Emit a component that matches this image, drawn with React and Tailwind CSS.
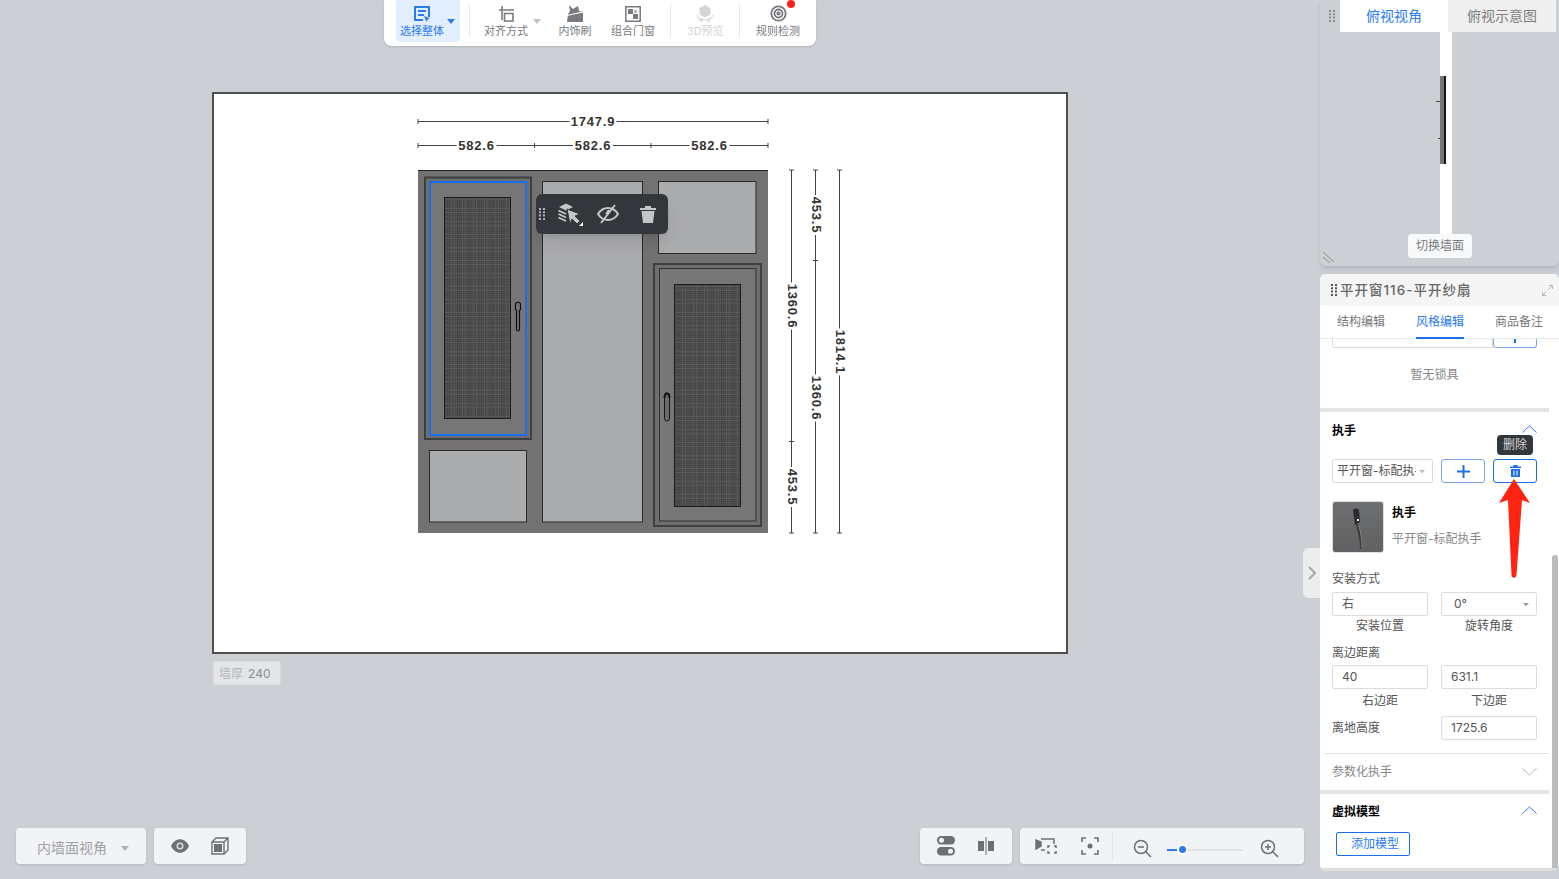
function Caret({ className }) {
  return (
    <svg width="8" height="5" viewBox="0 0 8 5" className={className}>
      <path d="M0 0h8L4 5z" fill="currentColor" />
    </svg>
  );
}

function Chevron({ up, color }) {
  return (
    <svg width="15" height="8" viewBox="0 0 15 8">
      <path d={up ? "M.5 7.5 7.5 1l7 6.5" : "M.5.5 7.5 7l7-6.5"} fill="none" stroke={color} strokeWidth="1" />
    </svg>
  );
}

function Grip({ className }) {
  return (
    <svg width="6" height="12" viewBox="0 0 6 12" className={className}>
      <path d="M0 0h2v2H0zM4 0h2v2H4zM0 3.300h2v2H0zM4 3.300h2v2H4zM0 6.600h2v2H0zM4 6.600h2v2H4zM0 10h2v2H0zM4 10h2v2H4z" fill="currentColor" />
    </svg>
  );
}

function ToolButton({ label, icon, width, active, disabled, caret }) {
  return (
    <div className={`relative flex h-[42px] flex-col items-center pt-[4px] ${width} ${active ? "rounded-b-sm bg-[#e3eeff] text-[#2a7bf0]" : disabled ? "text-[#d3d5d8]" : "text-[#777a7e]"}`}>
      <div className="flex h-[19px] items-center justify-center">{icon}</div>
      <span className="mt-[1px] text-[11px] leading-[14px] whitespace-nowrap">{label}</span>
      {caret && <Caret className={`absolute top-[19px] right-[5px] ${active ? "text-[#2a7bf0]" : "text-[#c0c2c5]"}`} />}
    </div>
  );
}

function TopToolbar() {
  const sep = <div className="mx-[4px] mt-[4px] h-[34px] w-px bg-[#e8e9eb]" />;
  return (
    <div className="absolute top-0 left-[384px] flex h-[46px] w-[432px] rounded-b-lg bg-white pl-[12px] shadow-sm">
      <ToolButton
        label="选择整体"
        width="w-[64px] pr-[12px]"
        active
        caret
        icon={
          <svg width="18" height="18" viewBox="0 0 18 18" fill="none" stroke="currentColor" strokeWidth="2">
            <path d="M16 12V2H2v13h8M5 6h8M5 10h6" />
            <path d="m11 11 6 2.500-2.500 1-1 2.500z" fill="currentColor" stroke="none" />
          </svg>
        }
      />
      <div className="w-[5px]" />
      {sep}
      <ToolButton
        label="对齐方式"
        width="w-[72px] pr-[8px]"
        caret
        icon={
          <svg width="17" height="16" viewBox="0 0 17 16" fill="none" stroke="currentColor" strokeWidth="1.600">
            <path d="M1 4h15M4 0v14" />
            <path d="M6.500 7.500h8.500v7.500H6.500z" />
          </svg>
        }
      />
      <ToolButton
        label="内饰刷"
        width="w-[56px] ml-[1px]"
        icon={
          <svg width="18" height="17" viewBox="0 0 18 17" fill="currentColor">
            <path d="M3 0 7 4l5-3 1 5 4 1v10H1l1-8 2-3z" />
            <path d="m1 10.500 16-3.500" stroke="#fff" strokeWidth="1.200" fill="none" />
          </svg>
        }
      />
      <ToolButton
        label="组合门窗"
        width="w-[60px]"
        icon={
          <svg width="16" height="16" viewBox="0 0 16 16">
            <path d="M.8.800h14.400v14.400H.8z" fill="none" stroke="currentColor" strokeWidth="1.500" />
            <path d="M3 3h5v5H3zM8 8h5v5H8z" fill="currentColor" />
            <path d="M9 4h3v3H9z" fill="currentColor" opacity=".5" />
          </svg>
        }
      />
      <div className="w-[3px]" />
      {sep}
      <ToolButton
        label="3D预览"
        width="w-[60px]"
        disabled
        icon={
          <svg width="18" height="18" viewBox="0 0 18 18" fill="currentColor">
            <path d="m9 0 5.500 3v6.500L9 12.500 3.500 9.500V3z" />
            <path d="M1.500 10c0 3 3 5 7.500 5s7.500-2 7.500-5M6 13l-2 2.500 3 1.500M12 13l2 2.500-3 1.500" fill="none" stroke="currentColor" strokeWidth="1.200" />
          </svg>
        }
      />
      {sep}
      <div className="relative">
        <ToolButton
          label="规则检测"
          width="w-[68px]"
          icon={
            <svg width="17" height="17" viewBox="0 0 17 17" fill="none" stroke="currentColor" strokeWidth="1.800">
              <circle cx="8.500" cy="8.500" r="7.200" />
              <circle cx="8.500" cy="8.500" r="4" />
              <circle cx="8.500" cy="8.500" r="1.200" />
            </svg>
          }
        />
        <span className="absolute top-0 left-[43px] size-[8px] rounded-full bg-[#ff1f1f]" />
      </div>
    </div>
  );
}

function Sash({ x, y, w, h, ix, iy, iw, ih, mx, my, mw, mh, selected }) {
  return (
    <g>
      <rect x={x} y={y} width={w} height={h} fill="#6f6e6f" stroke="#3f3f40" strokeWidth="2" />
      <rect x={ix} y={iy} width={iw} height={ih} fill="#777677" stroke={selected ? "#1a6ff0" : "#333"} strokeWidth={selected ? 2 : 1} />
      <rect x={mx} y={my} width={mw} height={mh} fill="url(#mesh)" stroke="#1d1d1d" strokeWidth="1" />
    </g>
  );
}

function Dim({ d, labels }) {
  return (
    <g>
      <path d={d} stroke="#444" strokeWidth="1" fill="none" />
      {labels.map((l) => (
        <g key={l.x + "-" + l.y} transform={l.rotate ? `rotate(90 ${l.x} ${l.y})` : undefined}>
          <rect x={l.x - (l.t.length * 7 + 5) / 2} y={l.y - 7} width={l.t.length * 7 + 5} height="14" fill="#fff" />
          <text x={l.x} y={l.y + (l.rotate ? 3.500 : 4.500)} textAnchor="middle" fontFamily="'Liberation Sans', sans-serif" fontSize="13" fontWeight="700" fill="#333" letterSpacing=".8">
            {l.t}
          </text>
        </g>
      ))}
    </g>
  );
}

function WindowDrawing() {
  return (
    <svg viewBox="214 94 852 558" className="block h-[558px] w-[852px]">
      <defs>
        <pattern id="mesh" width="2" height="2" patternUnits="userSpaceOnUse">
          <rect width="2" height="2" fill="#424243" />
          <path d="M0 .5h2M.5 0v2" stroke="#4f4f50" strokeWidth=".8" />
        </pattern>
        <pattern id="plaid" width="11" height="13" patternUnits="userSpaceOnUse">
          <path d="M0 0h1v13H0zM3 0h1v13H3zM0 0h11v1H0zM0 4h11v1H0z" fill="#fff" opacity=".07" />
        </pattern>
      </defs>

      <Dim d="M418 121.500H768M418 119v5M768 119v5" labels={[{ x: 593, y: 121.500, t: "1747.9" }]} />
      <Dim
        d="M418 145.500H768M418 143v5M534.500 143v5M651 143v5M768 143v5"
        labels={[
          { x: 476.500, y: 145.500, t: "582.6" },
          { x: 593, y: 145.500, t: "582.6" },
          { x: 709.500, y: 145.500, t: "582.6" },
        ]}
      />
      <Dim
        d="M791.500 170V533M789 170h5M789 441.500h5M789 533h5"
        labels={[
          { x: 791.500, y: 306, t: "1360.6", rotate: true },
          { x: 791.500, y: 487, t: "453.5", rotate: true },
        ]}
      />
      <Dim
        d="M815.500 170V533M813 170h5M813 260.500h5M813 533h5"
        labels={[
          { x: 815.500, y: 215, t: "453.5", rotate: true },
          { x: 815.500, y: 398, t: "1360.6", rotate: true },
        ]}
      />
      <Dim d="M839.500 170V533M837 170h5M837 533h5" labels={[{ x: 839.500, y: 352, t: "1814.1", rotate: true }]} />

      <rect x="418" y="170" width="350" height="363" fill="#737172" />
      <path d="M418 170.500H768" stroke="#222" />
      <rect x="542.500" y="181.500" width="100" height="340.500" fill="#aaabad" stroke="#2a2a2a" />
      <rect x="658.500" y="181.500" width="97.500" height="72" fill="#aaabad" stroke="#2a2a2a" />
      <rect x="429.500" y="450.500" width="97" height="71.500" fill="#aaabad" stroke="#2a2a2a" />

      <Sash x={425} y={177.500} w={106} h={261.500} ix={430} iy={182} iw={96} ih={253} mx={444.500} my={197.500} mw={66} mh={221} selected />
      <rect x="445" y="198" width="65" height="220" fill="url(#plaid)" />
      <path d="M515.500 304.500c0-3 5-3 5 0v5l-1 1v19c0 2-3 2-3 0v-19l-1-1z" fill="#777" stroke="#111" strokeWidth="1.200" />

      <Sash x={654} y={264} w={107} h={262} ix={659.500} iy={268.500} iw={96.500} ih={252.500} mx={674.500} my={284.500} mw={66} mh={222} />
      <rect x="675" y="285" width="65" height="221" fill="url(#plaid)" />
      <rect x="664.500" y="393" width="5" height="28" rx="2.500" fill="#6c6c6c" stroke="#151515" />
      <path d="M664.500 398c0-6 5-6 5 0" fill="none" stroke="#111" strokeWidth="2" />
    </svg>
  );
}

function FloatMenu() {
  return (
    <div className="absolute top-[194px] left-[536px] flex h-[40px] w-[132px] items-center rounded-md bg-[#33363b] text-[#c4c6c9] shadow-lg">
      <Grip className="ml-[3px] text-[#b0b2b5]" />
      <svg width="26" height="24" viewBox="0 0 26 24" className="ml-[12px]" fill="currentColor">
        <path d="M2 5 9 1.500 16 5 9 8.500z" />
        <path d="m1.500 8.500 7.500 3.500M1.500 12 9 15.500M1.500 15.500 9 19" stroke="currentColor" strokeWidth="1.800" fill="none" />
        <path d="m10 7 13 5-5 2 5 5-3 3-5-5-2 5z" stroke="#33363b" strokeWidth="1" />
        <path d="M26 20v4h-4z" fill="#fff" />
      </svg>
      <svg width="22" height="20" viewBox="0 0 22 20" className="ml-[14px]" fill="none" stroke="currentColor" strokeWidth="2">
        <path d="M1 10c5-8 15-8 20 0-5 8-15 8-20 0z" />
        <path d="M18 1 4 19M9 10l3-4" />
      </svg>
      <svg width="16" height="18" viewBox="0 0 16 18" className="ml-[21px]" fill="currentColor">
        <path d="M0 3h16v2H0zM5 1h6v2H5zM1.500 6h13L13 18H3z" />
      </svg>
    </div>
  );
}

function FloatBox({ className, children }) {
  return <div className={`absolute bottom-[15px] flex h-[36px] items-center rounded bg-[#f2f3f5] text-[#6c6f74] shadow-sm ${className}`}>{children}</div>;
}

function BottomBars() {
  return (
    <>
      <FloatBox className="left-[16px] w-[130px] pt-[4px] pl-[21px]">
        <span className="text-sm text-[#a0a2a6]">内墙面视角</span>
        <Caret className="ml-[14px] text-[#b0b2b5]" />
      </FloatBox>

      <FloatBox className="left-[154px] w-[92px]">
        <svg width="18" height="14" viewBox="0 0 18 14" className="ml-[17px]">
          <path d="M0 7c4-9 14-9 18 0-4 9-14 9-18 0z" fill="currentColor" />
          <circle cx="9" cy="7" r="3.500" fill="#d9dadc" />
          <circle cx="9" cy="7" r="2" fill="currentColor" />
        </svg>
        <svg width="18" height="18" viewBox="0 0 18 18" className="ml-[22px]" fill="none" stroke="currentColor" strokeWidth="1.400">
          <path d="M1 5v12h12V5zM1 5l4-4h12v12l-4 4M13 5l4-4" />
          <path d="M3 7h8v8H3z" fill="currentColor" stroke="none" />
        </svg>
      </FloatBox>

      <FloatBox className="left-[920px] w-[92px]">
        <svg width="18" height="20" viewBox="0 0 18 20" className="ml-[17px]">
          <rect y="0" width="18" height="8.500" rx="4.200" fill="currentColor" />
          <circle cx="4.500" cy="4.200" r="2.500" fill="#f2f3f5" />
          <rect y="11" width="18" height="8.500" rx="4.200" fill="currentColor" />
          <circle cx="13.500" cy="15.200" r="2.500" fill="#f2f3f5" />
        </svg>
        <svg width="18" height="18" viewBox="0 0 18 18" className="ml-[22px]" fill="currentColor">
          <path d="M1 4h6v10H1zM11 4h6v10h-6z" />
          <path d="M8.500 0h1v18h-1z" />
        </svg>
      </FloatBox>

      <FloatBox className="left-[1020px] w-[284px]">
        <svg width="22" height="18" viewBox="0 0 22 18" className="ml-[15px]" fill="none" stroke="currentColor" strokeWidth="1.500">
          <path d="M1 3v9l5-3V5z" fill="currentColor" />
          <path d="M6 2h13v5M6 13h4" />
          <path d="M13 11v-2h2M19 9h2v2M21 14v2h-2M15 16h-2v-2" />
        </svg>
        <svg width="18" height="18" viewBox="0 0 18 18" className="ml-[24px]" fill="none" stroke="currentColor" strokeWidth="1.600">
          <path d="M1 5V1h4M13 1h4v4M17 13v4h-4M5 17H1v-4" />
          <circle cx="9" cy="9" r="2.500" fill="currentColor" stroke="none" />
        </svg>
        <div className="ml-[13px] h-[30px] w-px bg-[#e4e5e7]" />
        <svg width="19" height="19" viewBox="0 0 19 19" className="mt-[4px] ml-[20px]" fill="none" stroke="currentColor" strokeWidth="1.500">
          <circle cx="8" cy="8" r="6.500" />
          <path d="M5 8h6M13 13l5 5" />
        </svg>
        <div className="relative mt-[7px] ml-[15px] h-[2px] w-[76px] bg-[#e3e4e6]">
          <div className="h-[2px] w-[11px] bg-[#2a7bf0]" />
          <span className="absolute top-[-2.500px] left-[12px] size-[7px] rounded-full bg-[#2a7bf0] ring-2 ring-white" />
        </div>
        <svg width="19" height="19" viewBox="0 0 19 19" className="mt-[4px] ml-[17px]" fill="none" stroke="currentColor" strokeWidth="1.500">
          <circle cx="8" cy="8" r="6.500" />
          <path d="M5 8h6M8 5v6M13 13l5 5" />
        </svg>
      </FloatBox>
    </>
  );
}

function TopViewPanel() {
  return (
    <div className="relative h-[266px] overflow-hidden rounded-b-md bg-[#ccd0d5] shadow-md">
      <div className="flex h-[32px]">
        <div className="flex w-[20px] items-center justify-center pl-[4px]">
          <Grip className="text-[#8b8d90]" />
        </div>
        <div className="flex w-[108px] items-center justify-center bg-white pb-[2px] text-[14px] text-[#2a7bf0]">俯视视角</div>
        <div className="flex w-[108px] items-center justify-center bg-[#efefef] pb-[2px] text-[14px] text-[#7d7f82]">俯视示意图</div>
      </div>
      <div className="ml-[120px] flex h-[202px] w-[12px] flex-col bg-white pt-[44px]">
        <div className="relative flex h-[88px] w-[6px] justify-end bg-[#777677]">
          <div className="h-full w-[2px] bg-[#151515]" />
          <div className="absolute top-[25px] left-[-4px] h-px w-[4px] bg-[#444]" />
          <div className="absolute top-[62px] left-[-2px] h-px w-[2px] bg-[#444]" />
        </div>
      </div>
      <div className="absolute top-[234px] left-[88px] flex h-[24px] w-[64px] items-center justify-center rounded-sm bg-[#f8f9fb] text-xs text-[#77797c]">切换墙面</div>
      <svg width="14" height="14" viewBox="0 0 14 14" className="absolute bottom-[2px] left-[2px]" stroke="#8b8d90" fill="none">
        <path d="m1 2 11 10M1 7l7 6" />
      </svg>
    </div>
  );
}

function Field({ value, caret, className }) {
  return (
    <div className={`flex h-[24px] items-center justify-between rounded-[2px] border border-[#dcdcdc] bg-white pr-[6px] pl-[9px] text-xs text-[#555] ${className}`}>
      <span>{value}</span>
      {caret && <Caret className="scale-75 text-[#999]" />}
    </div>
  );
}

function PropertyPanel() {
  return (
    <div className="flex h-[597px] flex-col overflow-hidden rounded-t-md rounded-b-md bg-white">
      <div className="flex h-[32px] items-center bg-[#f5f5f5] pl-[11px] text-[#666]">
        <Grip className="text-[#555]" />
        <span className="ml-[3px] text-[13.500px] font-medium tracking-[1px]">平开窗116-平开纱扇</span>
        <svg width="11" height="11" viewBox="0 0 11 11" className="mr-[6px] ml-auto" fill="none" stroke="#b5b5b5" strokeWidth="1">
          <path d="M6.500 4.500 10.500.5M7 .5h3.500V4M4.500 6.500l-4 4M4 10.500H.5V7" />
        </svg>
      </div>
      <div className="flex h-[33px] justify-between border-b border-[#e8e8e8] pr-[16px] pl-[17px] text-xs text-[#777]">
        <div className="pt-[8px]">结构编辑</div>
        <div className="h-[33px] border-b-2 border-[#1c6fe6] pt-[8px] text-[#2a7bf0]">风格编辑</div>
        <div className="pt-[8px]">商品备注</div>
      </div>

      <div className="relative flex-1 overflow-hidden">
        <div className="w-[229px]">
          <div className="flex h-[9px] px-[12px]">
            <div className="w-[161px] rounded-b-[2px] border border-t-0 border-[#dcdcdc]" />
            <div className="flex w-[44px] justify-center rounded-b-[3px] border border-t-0 border-[#7aa8ea]">
              <div className="h-[4px] w-[2px] bg-[#1c6fe6]" />
            </div>
          </div>
          <div className="flex h-[60px] items-start justify-center pt-[19px] text-xs text-[#888]">暂无锁具</div>
          <div className="h-[4px] bg-[#e4e4e4]" />

          <div className="px-[12px]">
            <div className="flex h-[36px] items-center justify-between pt-[2px]">
              <span className="text-xs font-semibold text-black">执手</span>
              <span className="mt-[-4px]">
                <Chevron up color="#2a7bf0" />
              </span>
            </div>
            <div className="relative mt-[11px] flex h-[24px]">
              <div className="flex h-[24px] w-[101px] items-center justify-between rounded-[2px] border border-[#dcdcdc] pr-[6px] pl-[4px] text-xs text-[#555]">
                <span className="w-[79px] overflow-hidden whitespace-nowrap">平开窗-标配执手</span>
                <Caret className="scale-75 text-[#bbb]" />
              </div>
              <div className="ml-[8px] flex w-[44px] items-center justify-center rounded-[3px] border border-[#7aa8ea] text-[#1c6fe6]">
                <svg width="13" height="13" viewBox="0 0 13 13" fill="currentColor">
                  <path d="M5.500 0h2v13h-2zM0 5.500h13v2H0z" />
                </svg>
              </div>
              <div className="ml-[8px] flex w-[44px] items-center justify-center rounded-[3px] border border-[#1c6fe6] text-[#1c6fe6]">
                <svg width="11" height="12" viewBox="0 0 11 12" fill="currentColor">
                  <path d="M0 1.500h11v1.500H0zM3.500 0h4v1.500h-4zM1 4h9v8H1z" />
                  <path d="M3.500 5.500h1v5h-1zM6.500 5.500h1v5h-1z" fill="#fff" />
                </svg>
              </div>
            </div>

            <div className="mt-[18px] flex">
              <div className="size-[52px] overflow-hidden rounded-[3px] border border-[#dedede]">
                <svg width="50" height="50" viewBox="0 0 50 50" className="block">
                  <defs>
                    <linearGradient id="thumbBg" x1="0" y1="0" x2="0" y2="1">
                      <stop offset="0" stopColor="#6d6f71" />
                      <stop offset="1" stopColor="#5f6163" />
                    </linearGradient>
                  </defs>
                  <rect width="50" height="50" fill="url(#thumbBg)" />
                  <path d="M20 8c1-2 5-2 6 0l1 12-5 3z" fill="#2c2c2e" />
                  <path d="M24 21c3 6 5 16 5 26h-2c0-8-2-16-4-24z" fill="#3f3e3b" />
                  <path d="M26 24c2 6 3 14 3 22" stroke="#8a8578" strokeWidth=".8" fill="none" />
                  <path d="M24 17h2v2h-2z" fill="#eee" />
                </svg>
              </div>
              <div className="ml-[8px] flex flex-col">
                <span className="mt-[4px] text-xs leading-[16px] font-semibold text-black">执手</span>
                <span className="mt-[10px] text-xs leading-[16px] text-[#888]">平开窗-标配执手</span>
              </div>
            </div>

            <div className="mt-[18px] text-xs leading-[16px] text-[#555]">安装方式</div>
            <div className="mt-[5px] grid grid-cols-[96px_96px] gap-x-[13px] text-center">
              <Field value="右" className="text-left" />
              <Field value="0°" caret className="pl-[12px]" />
              <div className="mt-[2px] text-xs leading-[16px] text-[#555]">安装位置</div>
              <div className="mt-[2px] text-xs leading-[16px] text-[#555]">旋转角度</div>
            </div>
            <div className="mt-[11px] text-xs leading-[16px] text-[#555]">离边距离</div>
            <div className="mt-[4px] grid grid-cols-[96px_96px] gap-x-[13px] text-center">
              <Field value="40" />
              <Field value="631.1" />
              <div className="mt-[4px] text-xs leading-[16px] text-[#555]">右边距</div>
              <div className="mt-[4px] text-xs leading-[16px] text-[#555]">下边距</div>
            </div>
            <div className="mt-[7px] grid grid-cols-[96px_96px] items-center gap-x-[13px]">
              <span className="text-xs text-[#555]">离地高度</span>
              <Field value="1725.6" />
            </div>
          </div>

          <div className="mt-[13px] ml-[4px] h-px bg-[#e2e2e2]" />
          <div className="flex h-[36px] items-center justify-between px-[12px] text-xs text-[#888]">
            <span>参数化执手</span>
            <Chevron color="#b5b5b5" />
          </div>
          <div className="h-[4px] bg-[#e4e4e4]" />
          <div className="flex h-[36px] items-center justify-between px-[12px]">
            <span className="text-xs font-semibold text-black">虚拟模型</span>
            <span className="mt-[-4px]">
              <Chevron up color="#2a7bf0" />
            </span>
          </div>
          <div className="mt-[2px] ml-[16px] flex h-[24px] w-[74px] items-center justify-center rounded-[2px] border border-[#1c6fe6] pb-[1px] pl-[4px] text-xs text-[#2a7bf0]">添加模型</div>
        </div>

        <div className="absolute top-[216px] right-[1px] bottom-0 w-[6px] rounded-full bg-[#bdbdbd]" />
        <div className="absolute right-0 bottom-0 left-0 h-[3px] bg-[#dcdcdc]" />
      </div>
    </div>
  );
}

function RedArrow() {
  return (
    <svg width="34" height="102" viewBox="0 0 34 102" className="absolute top-[478px] left-[1498px]">
      <path d="M16 1 32 25 24 22 18.500 97c-.3 3.500-4.700 3.500-5 0L10 22 1 25z" fill="#ff2311" />
    </svg>
  );
}

export default function App() {
  return (
    <div className="relative flex h-[879px] w-full overflow-hidden bg-[#ccd0d5] font-['Inter','Noto_Sans_CJK_SC',sans-serif]">
      <main className="flex-1">
        <TopToolbar />
        <div className="absolute top-[92px] left-[212px] border-2 border-[#4f4f50] bg-white">
          <WindowDrawing />
        </div>
        <FloatMenu />
        <div className="absolute top-[661px] left-[213px] flex h-[24px] w-[68px] items-center rounded-[2px] border border-[#d8dadd] bg-[#e3e5e8] pt-[1px] pl-[5px] text-xs text-[#8c8e91]">
          <span className="text-[#b5b7ba]">墙厚</span>
          <span className="ml-[5px]">240</span>
        </div>
        <BottomBars />
      </main>

      <aside className="relative flex w-[239px] flex-col gap-[8px]">
        <TopViewPanel />
        <PropertyPanel />
        <div className="absolute top-[548px] left-[-17px] flex h-[50px] w-[17px] items-center justify-center rounded-l-md bg-[#eceded] text-[#a5a7aa]">
          <svg width="8" height="14" viewBox="0 0 8 14" fill="none" stroke="currentColor" strokeWidth="2">
            <path d="m1 1 6 6-6 6" />
          </svg>
        </div>
        <div className="absolute top-[435px] left-[177px] flex h-[20px] w-[36px] items-center justify-center rounded-sm bg-[#33363b] text-xs text-[#d8d9db]">删除</div>
      </aside>

      <RedArrow />
    </div>
  );
}
